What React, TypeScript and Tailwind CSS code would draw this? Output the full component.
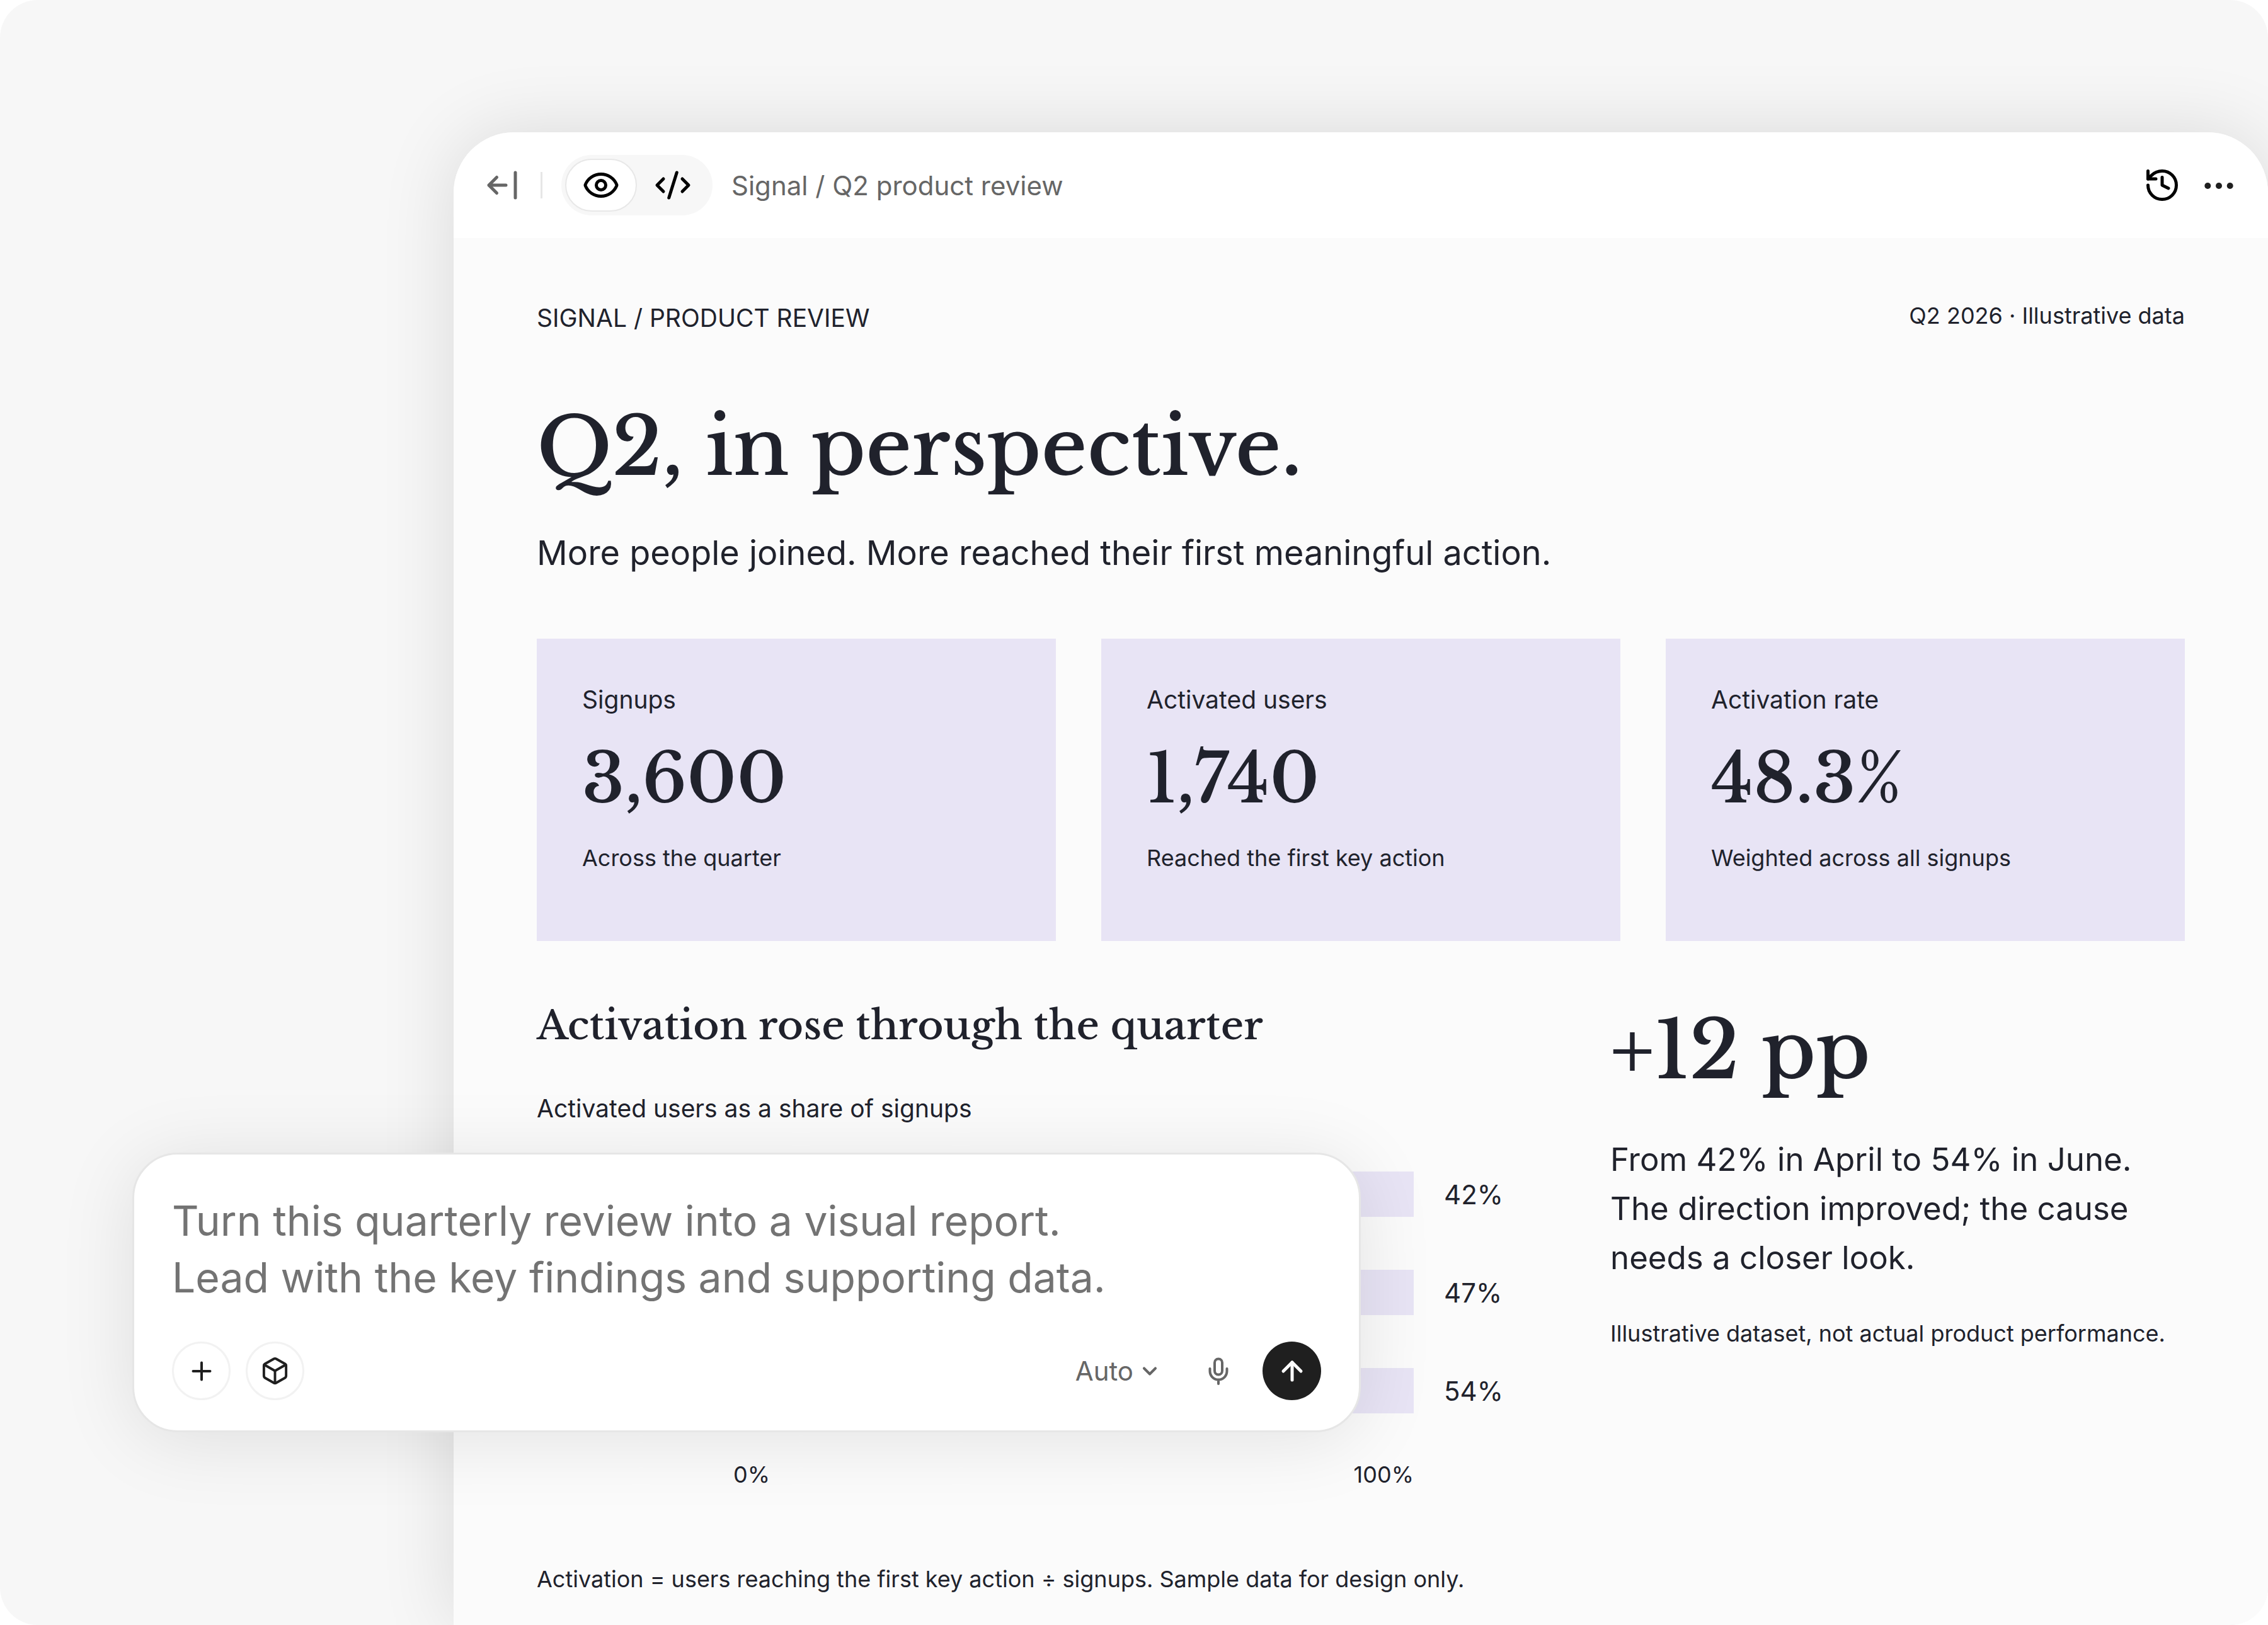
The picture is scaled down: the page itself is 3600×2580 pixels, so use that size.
import { useState } from 'react';
import { ArrowUp, Box, ChevronDown, CodeXml, Eye, History } from 'lucide-react';

const stats = [
  { label: 'Signups', value: '3,600', note: 'Across the quarter' },
  { label: 'Activated users', value: '1,740', note: 'Reached the first key action' },
  { label: 'Activation rate', value: '48.3%', note: 'Weighted across all signups' },
];

const months = [
  { name: 'April', share: 42 },
  { name: 'May', share: 47 },
  { name: 'June', share: 54 },
];

const stroke = {
  fill: 'none',
  stroke: 'currentColor',
  strokeLinecap: 'round',
  strokeLinejoin: 'round',
} as const;

function CollapseIcon() {
  return (
    <svg viewBox="0 0 54 54" className="size-[54px]" strokeWidth="5" {...stroke}>
      <path d="M35 27H8M20.500 14.500L8 27l12.500 12.500M50 7v40" />
    </svg>
  );
}

function MicIcon() {
  return (
    <svg viewBox="0 0 48 48" className="size-12" strokeWidth="4" {...stroke}>
      <rect x="18" y="4.500" width="12" height="25" rx="6" />
      <path d="M10.500 20v4a13.500 13.500 0 0 0 27 0v-4M24 38v6" />
    </svg>
  );
}

function Toolbar() {
  return (
    <header className="flex h-[168px] items-center bg-white pr-[51px] pl-12 text-black">
      <button aria-label="Collapse panel" className="text-[#666]">
        <CollapseIcon />
      </button>
      <span className="ml-9 h-[42px] w-[3px] bg-[#e6e6e6]" />
      <div className="ml-[30px] flex h-24 items-center rounded-full bg-[#f7f7f7] px-1.5">
        <button aria-label="Preview" className="flex h-[84px] w-[114px] items-center justify-center rounded-full border-2 border-[#e8e8e8] bg-white">
          <Eye className="size-[60px]" />
        </button>
        <button aria-label="Code" className="flex h-[84px] w-[114px] items-center justify-center">
          <CodeXml className="size-[60px]" />
        </button>
      </div>
      <p className="ml-[30px] text-[42px] text-[#666]">Signal / Q2 product review</p>
      <button aria-label="History" className="ml-auto">
        <History className="size-[60px]" />
      </button>
      <button aria-label="More" className="ml-[33px] text-[#1f1f1f]">
        <svg viewBox="0 0 54 54" className="size-[54px]" fill="currentColor">
          <circle cx="9.300" cy="28" r="5" />
          <circle cx="27" cy="28" r="5" />
          <circle cx="44.700" cy="28" r="5" />
        </svg>
      </button>
    </header>
  );
}

function Chart() {
  return (
    <section className="w-[1530px]">
      <h2 className="font-['Libre_Baskerville','Liberation_Serif',serif] text-[63px] leading-[96px] font-medium">
        Activation rose through the quarter
      </h2>
      <p className="mt-[54px] text-[39px] leading-[60px]">Activated users as a share of signups</p>
      <div className="mt-[70px] flex flex-col gap-[84px]">
        {months.map((m) => (
          <div key={m.name} className="flex h-[72px] items-center text-[42px]">
            <span className="w-[312px]">{m.name}</span>
            <div className="h-full flex-1 bg-[#e8e4f5]">
              <div className="h-full bg-[#7a68b8]" style={{ width: `${m.share}%` }} />
            </div>
            <span className="w-[138px] pl-12">{m.share}%</span>
          </div>
        ))}
      </div>
      <div className="mt-[70px] mr-[138px] ml-[312px] flex justify-between text-[36px] leading-[54px]">
        <span>0%</span>
        <span>100%</span>
      </div>
    </section>
  );
}

function Prompt() {
  const [text, setText] = useState(
    'Turn this quarterly review into a visual report.\nLead with the key findings and supporting data.'
  );
  return (
    <form
      onSubmit={(e) => e.preventDefault()}
      className="absolute top-[1830px] left-[210px] flex w-[1950px] flex-col rounded-[72px] border-[3px] border-[#e6e6e6] bg-white px-[60px] pt-[60px] pb-12 shadow-[0_12px_120px_rgba(0,0,0,0.10)]"
    >
      <textarea
        aria-label="Prompt"
        rows={2}
        value={text}
        onChange={(e) => setText(e.target.value)}
        className="block resize-none overflow-hidden text-[66px] leading-[90px] text-[#737373] outline-none"
      />
      <div className="mt-[57px] flex items-center">
        <button aria-label="Add" className="flex size-[93px] items-center justify-center rounded-full border-[3px] border-[#f2f2f2] text-[#1f1f1f]">
          <svg viewBox="0 0 48 48" className="size-12" strokeWidth="4" {...stroke}>
            <path d="M24 10.500v27M10.500 24h27" />
          </svg>
        </button>
        <button aria-label="Files" className="ml-6 flex size-[93px] items-center justify-center rounded-full border-[3px] border-[#f2f2f2] text-[#1f1f1f]">
          <Box className="size-[47px]" />
        </button>
        <button className="ml-auto flex items-center gap-2 text-[42px] text-[#666]">
          Auto
          <ChevronDown className="size-9" strokeWidth={2.7} />
        </button>
        <button aria-label="Dictate" className="ml-[67px] text-[#666]">
          <MicIcon />
        </button>
        <button aria-label="Send" className="ml-[46px] flex size-[93px] items-center justify-center rounded-full bg-[#1f1f1f] text-white">
          <ArrowUp className="size-12" strokeWidth={2.5} />
        </button>
      </div>
    </form>
  );
}

export default function App() {
  return (
    <div className="min-h-screen bg-white font-['Inter',sans-serif]">
      <div className="relative flex min-h-screen overflow-hidden rounded-[60px] bg-[#f7f7f7] pt-[210px] pl-[720px]">
        <main className="flex-1 rounded-t-[96px] bg-[#fbfbfb] text-[#20222c] shadow-[0_0_120px_rgba(0,0,0,0.12)]">
          <div className="overflow-hidden rounded-t-[96px]">
            <Toolbar />
          </div>
          <div className="px-[132px] pt-24">
            <div className="flex justify-between">
              <p className="text-[39px] leading-[62px]">SIGNAL / PRODUCT REVIEW</p>
              <p className="text-[36px] leading-[54px]">Q2 2026 · Illustrative data</p>
            </div>
            <h1 className="mt-[84px] font-['Libre_Baskerville','Liberation_Serif',serif] text-[126px] leading-[180px] font-medium">
              Q2, in perspective.
            </h1>
            <p className="mt-9 text-[54px] leading-[84px]">
              More people joined. More reached their first meaningful action.
            </p>
            <div className="mt-[94px] grid grid-cols-3 gap-[72px]">
              {stats.map((s) => (
                <div key={s.label} className="h-[480px] bg-[#e8e4f5] px-[72px] pt-[67px]">
                  <p className="text-[39px] leading-[60px]">{s.label}</p>
                  <p className="mt-5 font-['Libre_Baskerville','Liberation_Serif',serif] text-[108px] leading-[150px] font-medium">
                    {s.value}
                  </p>
                  <p className="mt-6 text-[36px] leading-[54px]">{s.note}</p>
                </div>
              ))}
            </div>
            <div className="mt-[86px] flex justify-between">
              <Chart />
              <aside className="w-[912px]">
                <p className="font-['Libre_Baskerville','Liberation_Serif',serif] text-[126px] leading-[176px] font-medium">+12 pp</p>
                <p className="mt-[46px] text-[51px] leading-[78px]">
                  From 42% in April to 54% in June. The direction improved; the cause needs a closer look.
                </p>
                <p className="mt-[54px] text-[36px] leading-[54px]">
                  Illustrative dataset, not actual product performance.
                </p>
              </aside>
            </div>
            <p className="mt-[112px] text-[36px] leading-[54px]">
              Activation = users reaching the first key action ÷ signups. Sample data for design only.
            </p>
          </div>
        </main>
        <Prompt />
      </div>
    </div>
  );
}
